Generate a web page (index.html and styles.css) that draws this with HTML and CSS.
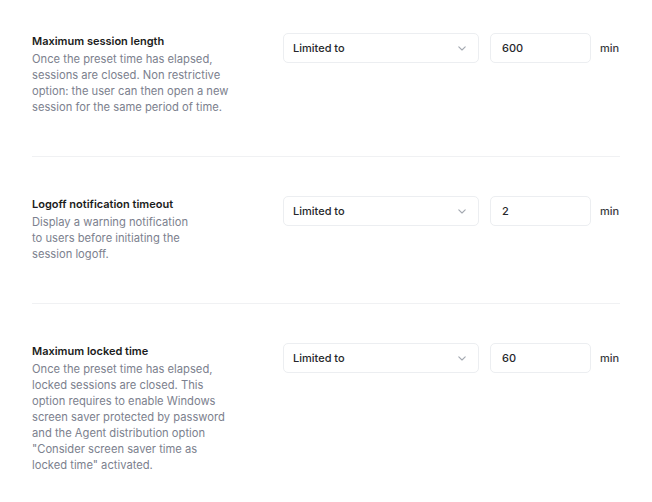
FILE: index.html
```html
<!DOCTYPE html>
<html lang="en">
<head>
<meta charset="utf-8">
<link rel="stylesheet" href="styles.css">
</head>
<body>
<div class="settings">
  <div class="row first">
    <div class="info">
      <div class="title">Maximum session length</div>
      <div class="desc">Once the preset time has elapsed,<br>sessions are closed. Non restrictive<br>option: the user can then open a new<br>session for the same period of time.</div>
    </div>
    <div class="controls">
      <div class="select"><span>Limited to</span><svg class="chev" width="8" height="5" viewBox="0 0 8 5"><polyline points="0.8,0.8 4,4 7.2,0.8" fill="none" stroke="#a3a8b0" stroke-width="1.1" stroke-linecap="round" stroke-linejoin="round"/></svg></div>
      <div class="input">600</div>
      <span class="unit">min</span>
    </div>
  </div>
  <div class="row">
    <div class="info">
      <div class="title">Logoff notification timeout</div>
      <div class="desc">Display a warning notification<br>to users before initiating the<br>session logoff.</div>
    </div>
    <div class="controls">
      <div class="select"><span>Limited to</span><svg class="chev" width="8" height="5" viewBox="0 0 8 5"><polyline points="0.8,0.8 4,4 7.2,0.8" fill="none" stroke="#a3a8b0" stroke-width="1.1" stroke-linecap="round" stroke-linejoin="round"/></svg></div>
      <div class="input">2</div>
      <span class="unit">min</span>
    </div>
  </div>
  <div class="row">
    <div class="info">
      <div class="title">Maximum locked time</div>
      <div class="desc">Once the preset time has elapsed,<br>locked sessions are closed. This<br>option requires to enable Windows<br>screen saver protected by password<br>and the Agent distribution option<br>"Consider screen saver time as<br>locked time" activated.</div>
    </div>
    <div class="controls">
      <div class="select"><span>Limited to</span><svg class="chev" width="8" height="5" viewBox="0 0 8 5"><polyline points="0.8,0.8 4,4 7.2,0.8" fill="none" stroke="#a3a8b0" stroke-width="1.1" stroke-linecap="round" stroke-linejoin="round"/></svg></div>
      <div class="input">60</div>
      <span class="unit">min</span>
    </div>
  </div>
</div>
</body>
</html>
```
FILE: styles.css
```css
html, body {
  margin: 0;
  padding: 0;
  background: #ffffff;
}
body {
  font-family: Inter, "Noto Sans", "Liberation Sans", sans-serif;
  font-size: 11px;
  line-height: 16px;
  color: #1d1e22;
}
.settings {
  width: 588px;
  margin-left: 32px;
}
.row {
  display: flex;
  align-items: flex-start;
  padding: 39px 0 41px;
  border-top: 1px solid #f0f1f3;
}
.row.first {
  border-top: none;
  padding-top: 33px;
}
.info {
  width: 251px;
  flex: none;
}
.title {
  font-weight: 600;
  color: #1b1c20;
  margin-bottom: 2px;
}
.desc {
  font-size: 11.2px;
  color: #7c818e;
  white-space: nowrap;
}
.controls {
  display: flex;
  align-items: center;
}
.select {
  box-sizing: border-box;
  width: 196px;
  height: 30px;
  border: 1px solid #eceef1;
  border-radius: 5px;
  display: flex;
  align-items: center;
  justify-content: space-between;
  padding: 0 12px 0 9px;
  font-weight: 500;
  color: #26272b;
}
.chev {
  display: block;
}
.input {
  box-sizing: border-box;
  width: 101px;
  height: 30px;
  margin-left: 11px;
  border: 1px solid #eceef1;
  border-radius: 5px;
  display: flex;
  align-items: center;
  padding: 0 11px;
  font-weight: 500;
  color: #26272b;
}
.unit {
  margin-left: 9px;
  font-weight: 500;
  color: #3a3b40;
}
```
